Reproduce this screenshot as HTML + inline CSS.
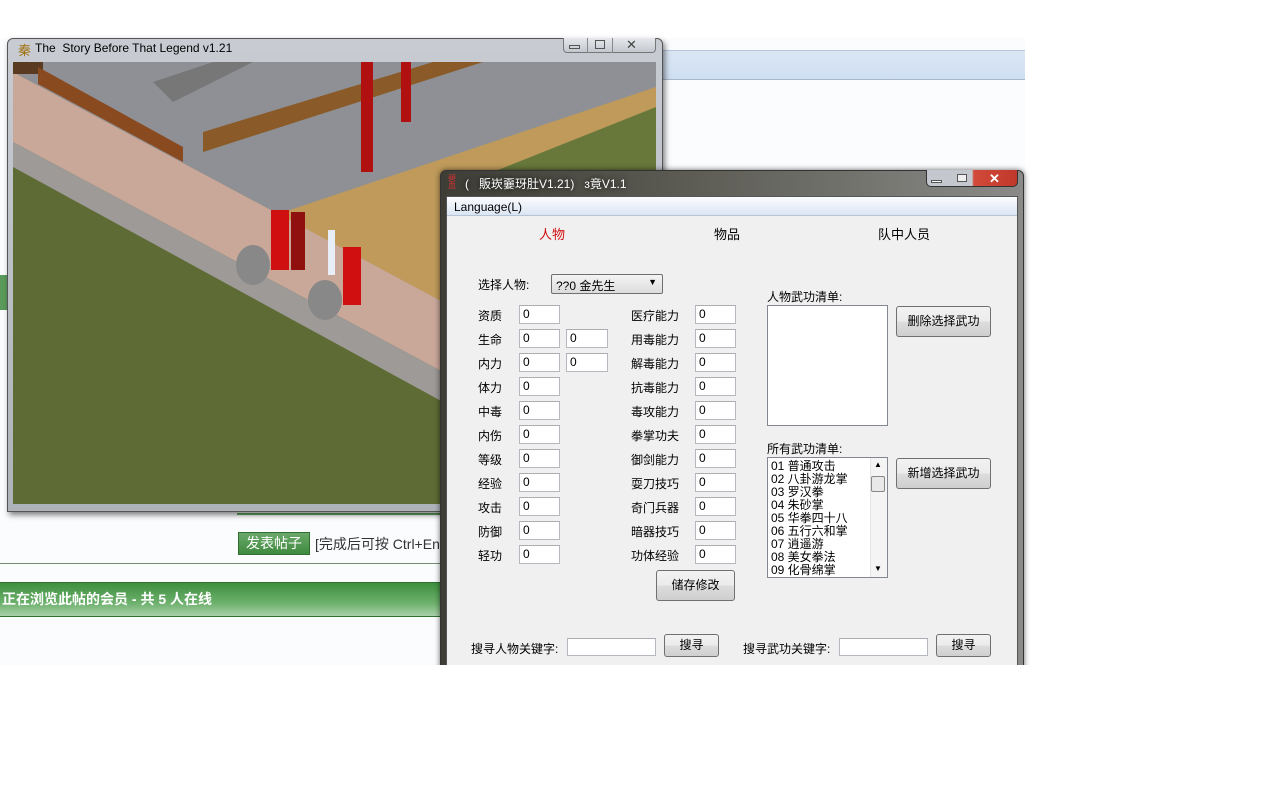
<!DOCTYPE html>
<html><head><meta charset="utf-8"><style>
*{margin:0;padding:0;box-sizing:border-box}
body{width:1280px;height:800px;background:#fff;position:relative;overflow:hidden;font-family:"Liberation Sans","Noto Sans CJK SC",sans-serif;font-size:12px;color:#000}
.a{position:absolute}
.inp{position:absolute;background:#fff;border:1px solid #b5b9bf;border-top-color:#abadb3;height:19px;font-size:12px;padding:1px 3px;line-height:15px}
.btn{position:absolute;border:1px solid #707070;border-radius:3px;background:linear-gradient(#f2f2f2,#ebebeb 50%,#dddddd 51%,#cfcfcf);text-align:center;font-size:12px}
.lbl{position:absolute;font-size:12px}
</style></head><body>
<div class="a" style="left:0;top:38px;width:1025px;height:627px;background:#fbfcfe"></div>
<div class="a" style="left:662px;top:50px;width:363px;height:30px;background:linear-gradient(#dbe6f4,#cfdff2);border-top:1px solid #b8c8dc;border-bottom:1px solid #a9b9cc"></div>
<div class="a" style="left:0;top:275px;width:8px;height:35px;background:#5a9a5a"></div>
<div class="a" style="left:237px;top:513px;width:205px;height:3px;border-top:2px solid #5fa55f"></div>
<div class="a" style="left:238px;top:532px;width:72px;height:23px;background:linear-gradient(#6aa86a,#3f8a3f);border:1px solid #2f6f2f;color:#fff;font-size:14px;text-align:center;line-height:21px">发表帖子</div>
<div class="a" style="left:315px;top:534px;font-size:14px;color:#333">[完成后可按 Ctrl+En</div>
<div class="a" style="left:0;top:563px;width:440px;border-top:1px solid #6f8f6f"></div>
<div class="a" style="left:0;top:582px;width:440px;height:35px;background:linear-gradient(#3f8f3f,#6cb06c 60%,#a8d0a8);border-top:1px solid #2f6f2f;border-bottom:1px solid #2f6f2f;color:#fff;font-weight:bold;font-size:14px;line-height:33px;padding-left:2px">正在浏览此帖的会员 - 共 5 人在线</div>

<div class="a" style="left:7px;top:38px;width:656px;height:474px;background:linear-gradient(#c8ccd2,#aeb3ba);border:1px solid #555;border-radius:6px 6px 0 0;box-shadow:2px 3px 6px rgba(0,0,0,.5)"></div>
<div class="a" style="left:18px;top:40px;width:12px;height:16px;color:#a07010;font-size:13px">秦</div>
<div class="a" style="left:35px;top:41px;font-size:12px;color:#000">The &nbsp;Story Before That Legend v1.21</div>
<div class="a" style="left:563px;top:38px;width:93px;height:15px;border:1px solid #777;border-top:none;border-radius:0 0 4px 4px;background:linear-gradient(#e6e8ec,#c4c8ce)"></div>
<div class="a" style="left:587px;top:38px;width:1px;height:15px;background:#888"></div>
<div class="a" style="left:612px;top:38px;width:1px;height:15px;background:#888"></div>
<div class="a" style="left:569px;top:45px;width:11px;height:4px;border:1px solid #555"></div>
<div class="a" style="left:595px;top:40px;width:10px;height:9px;border:1px solid #555"></div>
<div class="a" style="left:626px;top:37px;font-size:13px;color:#444">✕</div>
<svg class="a" style="left:13px;top:62px" width="643" height="442" viewBox="0 0 643 442">
<rect width="643" height="442" fill="#5f6b35"/>
<polygon points="0,0 643,0 643,354 0,10" fill="#8e9096"/>
<polygon points="265,152 643,25 643,354" fill="#bf9a5a"/>
<polygon points="480,110 643,45 643,230 560,200" fill="#68783a"/>
<polygon points="0,10 430,240 430,310 0,80" fill="#c9a89a"/>
<polygon points="0,80 430,310 430,340 0,105" fill="#9d9a98"/>
<polygon points="0,0 30,0 30,12 0,12" fill="#5a3a20"/>
<polygon points="25,5 170,85 170,100 25,22" fill="#8a4a20"/>
<polygon points="190,70 420,0 470,0 190,90" fill="#8a5a28"/>
<polygon points="140,20 200,0 240,0 160,40" fill="#777"/>
<rect x="258" y="148" width="18" height="60" fill="#d01010"/>
<rect x="278" y="150" width="14" height="58" fill="#901010"/>
<rect x="330" y="185" width="18" height="58" fill="#d01010"/>
<rect x="348" y="0" width="12" height="110" fill="#b01010"/>
<rect x="388" y="0" width="10" height="60" fill="#b01010"/>
<rect x="315" y="168" width="7" height="45" fill="#e8eef8"/>
<ellipse cx="240" cy="203" rx="17" ry="20" fill="#888"/>
<ellipse cx="312" cy="238" rx="17" ry="20" fill="#888"/>
</svg>

<div class="a" style="left:440px;top:170px;width:584px;height:500px;background:linear-gradient(90deg,#3e3e36,#5a5a52 40%,#8a8a88);border:1px solid #333;border-radius:6px 6px 0 0;box-shadow:0 0 6px rgba(0,0,0,.6)"></div>
<div class="a" style="left:448px;top:175px;width:12px;height:14px;font-size:8px;line-height:7px;color:#c33">碧<br>血</div>
<div class="a" style="left:465px;top:175px;font-size:12px;color:#fff;text-shadow:0 0 6px #000">( &nbsp;&nbsp;販崁嫑玡肚V1.21) &nbsp;&nbsp;ɜ竟V1.1</div>
<div class="a" style="left:926px;top:170px;width:92px;height:17px;border:1px solid #333;border-top:none;border-radius:0 0 5px 5px;background:linear-gradient(90deg,#c4c8ce 0,#c4c8ce 50%,#d24a3a 52%,#c0382a)"></div>
<div class="a" style="left:931px;top:180px;width:11px;height:3px;background:#fff;border:1px solid #555"></div>
<div class="a" style="left:957px;top:174px;width:10px;height:8px;border:1px solid #555;background:#eee"></div>
<div class="a" style="left:989px;top:171px;font-size:13px;color:#fff;font-weight:bold">✕</div>
<div class="a" style="left:446px;top:196px;width:572px;height:470px;background:#f0f0f0;border:1px solid #555;border-bottom:none"></div>
<div class="a" style="left:447px;top:197px;width:570px;height:19px;background:linear-gradient(#fbfcfe,#dbe5f3);border-bottom:1px solid #b6c4d8"></div>
<div class="lbl" style="left:454px;top:200px">Language(L)</div>
<div class="lbl" style="left:539px;top:224px;color:#d01010;font-size:13px">人物</div>
<div class="lbl" style="left:714px;top:224px;font-size:13px">物品</div>
<div class="lbl" style="left:878px;top:224px;font-size:13px">队中人员</div>
<div class="lbl" style="left:478px;top:276px">选择人物:</div>
<div class="a" style="left:551px;top:274px;width:112px;height:20px;border:1px solid #707070;border-radius:2px;background:linear-gradient(#f4f4f4,#dcdcdc);padding:2px 4px;font-size:12px">??0 金先生<span style="position:absolute;right:5px;top:2px;font-size:9px">▼</span></div>

<div class="lbl" style="left:478px;top:307px">资质</div>
<div class="lbl" style="left:478px;top:331px">生命</div>
<div class="lbl" style="left:478px;top:355px">内力</div>
<div class="lbl" style="left:478px;top:379px">体力</div>
<div class="lbl" style="left:478px;top:403px">中毒</div>
<div class="lbl" style="left:478px;top:427px">内伤</div>
<div class="lbl" style="left:478px;top:451px">等级</div>
<div class="lbl" style="left:478px;top:475px">经验</div>
<div class="lbl" style="left:478px;top:499px">攻击</div>
<div class="lbl" style="left:478px;top:523px">防御</div>
<div class="lbl" style="left:478px;top:547px">轻功</div>
<div class="inp" style="left:519px;top:305px;width:41px">0</div>
<div class="inp" style="left:519px;top:329px;width:41px">0</div>
<div class="inp" style="left:519px;top:353px;width:41px">0</div>
<div class="inp" style="left:519px;top:377px;width:41px">0</div>
<div class="inp" style="left:519px;top:401px;width:41px">0</div>
<div class="inp" style="left:519px;top:425px;width:41px">0</div>
<div class="inp" style="left:519px;top:449px;width:41px">0</div>
<div class="inp" style="left:519px;top:473px;width:41px">0</div>
<div class="inp" style="left:519px;top:497px;width:41px">0</div>
<div class="inp" style="left:519px;top:521px;width:41px">0</div>
<div class="inp" style="left:519px;top:545px;width:41px">0</div>
<div class="inp" style="left:566px;top:329px;width:42px">0</div>
<div class="inp" style="left:566px;top:353px;width:42px">0</div>

<div class="lbl" style="left:631px;top:307px">医疗能力</div>
<div class="lbl" style="left:631px;top:331px">用毒能力</div>
<div class="lbl" style="left:631px;top:355px">解毒能力</div>
<div class="lbl" style="left:631px;top:379px">抗毒能力</div>
<div class="lbl" style="left:631px;top:403px">毒攻能力</div>
<div class="lbl" style="left:631px;top:427px">拳掌功夫</div>
<div class="lbl" style="left:631px;top:451px">御剑能力</div>
<div class="lbl" style="left:631px;top:475px">耍刀技巧</div>
<div class="lbl" style="left:631px;top:499px">奇门兵器</div>
<div class="lbl" style="left:631px;top:523px">暗器技巧</div>
<div class="lbl" style="left:631px;top:547px">功体经验</div>
<div class="inp" style="left:695px;top:305px;width:41px">0</div>
<div class="inp" style="left:695px;top:329px;width:41px">0</div>
<div class="inp" style="left:695px;top:353px;width:41px">0</div>
<div class="inp" style="left:695px;top:377px;width:41px">0</div>
<div class="inp" style="left:695px;top:401px;width:41px">0</div>
<div class="inp" style="left:695px;top:425px;width:41px">0</div>
<div class="inp" style="left:695px;top:449px;width:41px">0</div>
<div class="inp" style="left:695px;top:473px;width:41px">0</div>
<div class="inp" style="left:695px;top:497px;width:41px">0</div>
<div class="inp" style="left:695px;top:521px;width:41px">0</div>
<div class="inp" style="left:695px;top:545px;width:41px">0</div>
<div class="btn" style="left:656px;top:570px;width:79px;height:31px;line-height:29px">储存修改</div>

<div class="lbl" style="left:767px;top:288px">人物武功清单:</div>
<div class="a" style="left:767px;top:305px;width:121px;height:121px;background:#fff;border:1px solid #828790"></div>
<div class="btn" style="left:896px;top:306px;width:95px;height:31px;line-height:29px">删除选择武功</div>
<div class="lbl" style="left:767px;top:440px">所有武功清单:</div>
<div class="a" style="left:767px;top:457px;width:121px;height:121px;background:#fff;border:1px solid #828790;font-size:12px;line-height:13px;padding:2px 3px">01 普通攻击<br>02 八卦游龙掌<br>03 罗汉拳<br>04 朱砂掌<br>05 华拳四十八<br>06 五行六和掌<br>07 逍遥游<br>08 美女拳法<br>09 化骨绵掌</div>
<div class="a" style="left:870px;top:458px;width:17px;height:119px;background:#f4f4f4;border-left:1px solid #e4e4e4"></div>
<div class="a" style="left:874px;top:460px;font-size:8px">▲</div>
<div class="a" style="left:871px;top:476px;width:14px;height:16px;border:1px solid #888;border-radius:2px;background:#e8e8e8"></div>
<div class="a" style="left:874px;top:564px;font-size:8px">▼</div>
<div class="btn" style="left:896px;top:458px;width:95px;height:31px;line-height:29px">新增选择武功</div>

<div class="lbl" style="left:471px;top:640px">搜寻人物关键字:</div>
<div class="inp" style="left:567px;top:638px;width:89px;height:18px"></div>
<div class="btn" style="left:664px;top:634px;width:55px;height:23px;line-height:21px">搜寻</div>
<div class="lbl" style="left:743px;top:640px">搜寻武功关键字:</div>
<div class="inp" style="left:839px;top:638px;width:89px;height:18px"></div>
<div class="btn" style="left:936px;top:634px;width:55px;height:23px;line-height:21px">搜寻</div>
<div class="a" style="left:0;top:665px;width:1280px;height:135px;background:#fff"></div>
</body></html>
